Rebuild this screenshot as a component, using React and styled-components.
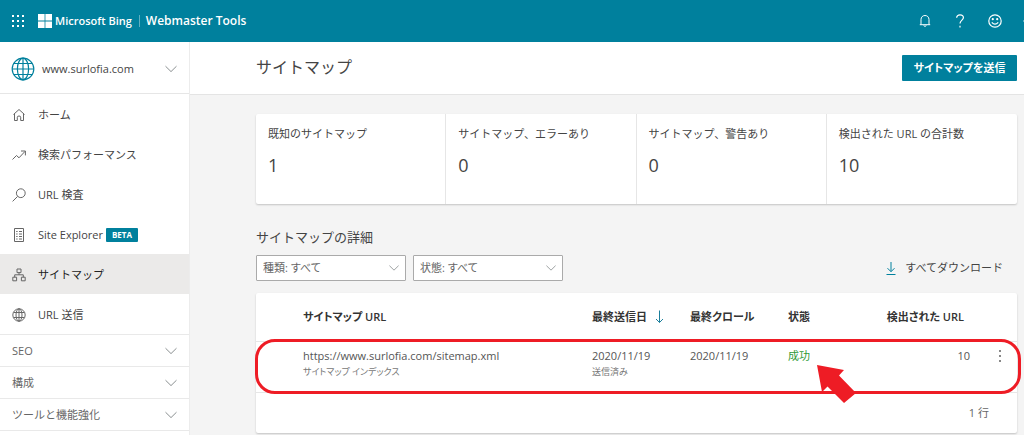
import React from "react";
import styled, { createGlobalStyle } from "styled-components";

const pages = [
  { label: "ホーム", icon: "home" },
  { label: "検索パフォーマンス", icon: "trend" },
  { label: "URL 検査", icon: "search" },
  { label: "Site Explorer", icon: "list", beta: true },
  { label: "サイトマップ", icon: "sitemap", active: true },
  { label: "URL 送信", icon: "globe" },
];

const groups = ["SEO", "構成", "ツールと機能強化"];

const stats = [
  { label: "既知のサイトマップ", value: 1 },
  { label: "サイトマップ、エラーあり", value: 0 },
  { label: "サイトマップ、警告あり", value: 0 },
  { label: "検出された URL の合計数", value: 10 },
];

const filters = [
  { id: "type", name: "種類", value: "種類: すべて" },
  { id: "status", name: "状態", value: "状態: すべて" },
];

const icons = {
  home: <path d="M1.5 6.5 7 1.5l5.500 5M2.500 5.800V12.500H5.300V9.200q0-1.200 1.700-1.200t1.700 1.200V12.500H11.500V5.800" />,
  trend: <path d="M.5 11.5 4.5 7.500l2.500 2.300L13 3.400M9 3h4.400v4.400" />,
  search: (
    <>
      <circle cx="8.800" cy="5.200" r="4.400" />
      <path d="M5.600 8.400.6 13.400" />
    </>
  ),
  list: (
    <path d="M2.500 .5h9v13h-9zM4.200 3.500h1.400M4.200 6h1.400M4.200 8.500h1.400M4.200 11h1.400M7 3.500h3M7 6h3M7 8.500h3M7 11h3" />
  ),
  sitemap: (
    <path d="M5 1h4v3.600H5zM.8 9.200h3.800v3.600H.8zM9.400 9.200h3.800v3.600H9.400zM7 4.600v2.200M2.700 9.200V6.800h8.600v2.400" />
  ),
  globe: (
    <>
      <circle cx="7" cy="7" r="6.200" />
      <ellipse cx="7" cy="7" rx="3" ry="6.200" />
      <path d="M1.600 4.500h10.800M1.600 9.500h10.800M7 .8v12.400" />
    </>
  ),
};

function Chevron({ size = 12 }) {
  return (
    <LineSvg width={size} height={size} viewBox="0 0 12 12" $color="#8a8f90">
      <path d="m.5 3.2 5.5 5.4 5.5-5.4" />
    </LineSvg>
  );
}

function TopBar() {
  return (
    <Header>
      <BarButton aria-label="アプリ">
        <svg width="14" height="14" viewBox="0 0 14 14" fill="#fff">
          {[1, 6, 11].map((y) =>
            [1, 6, 11].map((x) => (
              <rect key={`${x}-${y}`} x={x} y={y} width="2" height="2" />
            ))
          )}
        </svg>
      </BarButton>
      <Brand href="#home">
        <svg width="14" height="14" viewBox="0 0 14 14" fill="#fff">
          <path d="M0 0h6.600v6.600H0zM7.400 0H14v6.600H7.400zM0 7.400h6.600V14H0zM7.400 7.400H14V14H7.400z" />
        </svg>
        <BrandName>Microsoft Bing</BrandName>
        <Product>Webmaster Tools</Product>
      </Brand>
      <Actions>
        <BarButton aria-label="通知">
          <LineSvg width="14" height="14" viewBox="0 0 14 14" $color="#fff">
            <path d="M3 10.500V5.600C3 3 4.800 1.500 7 1.500S11 3 11 5.600v4.900M1.800 10.700h10.400M5.600 11.600q1.400 1.600 2.800 0" />
          </LineSvg>
        </BarButton>
        <BarButton aria-label="ヘルプ">
          <LineSvg width="14" height="14" viewBox="0 0 14 14" $color="#fff" $stroke={1.2}>
            <path d="M3.600 3.800C3.800 1.800 5.200.8 7 .8s3.400 1.100 3.400 3C10.400 6 7 6.400 7 9.600M7 11.800v1.600" />
          </LineSvg>
        </BarButton>
        <BarButton aria-label="フィードバック">
          <LineSvg width="14" height="14" viewBox="0 0 14 14" $color="#fff" $stroke={1.2}>
            <circle cx="7" cy="7" r="6.200" />
            <path d="M3.800 8.300q3.200 3.800 6.400 0" />
            <circle cx="4.800" cy="5.200" r=".5" />
            <circle cx="9.200" cy="5.200" r=".5" />
          </LineSvg>
        </BarButton>
        <BarButton aria-label="設定">
          <LineSvg width="14" height="14" viewBox="0 0 14 14" $color="#fff">
            <circle cx="7" cy="7" r="2" />
            <circle cx="7" cy="7" r="4.400" />
            <path d="M7 .3v2.300M7 11.400v2.300M.3 7h2.300M11.400 7h2.300M2.300 2.300l1.600 1.600M10.100 10.100l1.600 1.600M2.300 11.700l1.600-1.600M10.100 3.900l1.600-1.600" />
          </LineSvg>
        </BarButton>
      </Actions>
    </Header>
  );
}

function Sidebar() {
  return (
    <Side>
      <SitePicker>
        <LineSvg width="24" height="24" viewBox="0 0 24 24" $color="#00809d" $stroke={1.2}>
          <circle cx="12" cy="12" r="10.800" />
          <ellipse cx="12" cy="12" rx="5.600" ry="10.800" />
          <path d="M12 1.200v21.600M1.200 12h21.600M2.800 6.500h18.400M2.800 17.500h18.400" />
        </LineSvg>
        <Grow>www.surlofia.com</Grow>
        <Chevron />
      </SitePicker>
      <nav>
        {pages.map((page) => (
          <NavLink key={page.label} href="#nav" $active={page.active}>
            <LineSvg width="14" height="14" viewBox="0 0 14 14" $color="#666">
              {icons[page.icon]}
            </LineSvg>
            {page.label}
            {page.beta && <Beta>BETA</Beta>}
          </NavLink>
        ))}
      </nav>
      {groups.map((group) => (
        <Group key={group}>
          <Grow>{group}</Grow>
          <Chevron />
        </Group>
      ))}
    </Side>
  );
}

function SitemapTable() {
  return (
    <TableCard>
      <Table>
        <colgroup>
          <col />
          <col width="98" />
          <col width="98" />
          <col width="80" />
          <col width="102" />
          <col width="47" />
        </colgroup>
        <thead>
          <tr>
            <Th $first>サイトマップ URL</Th>
            <Th>
              <Sort>
                最終送信日
                <LineSvg width="9" height="13" viewBox="0 0 9 13" $color="#1b7f9c">
                  <path d="M4.500 .5v12M1 9l3.500 3.500L8 9" />
                </LineSvg>
              </Sort>
            </Th>
            <Th>最終クロール</Th>
            <Th>状態</Th>
            <Th $right>検出された URL</Th>
            <Th />
          </tr>
        </thead>
        <tbody>
          <tr>
            <Td $first>
              https://www.surlofia.com/sitemap.xml
              <Note>サイトマップ インデックス</Note>
            </Td>
            <Td>
              2020/11/19
              <Note>送信済み</Note>
            </Td>
            <Td>2020/11/19</Td>
            <Td>
              <Status>
                成功
                <Pointer width="40" height="38" viewBox="0 0 40 38">
                  <path d="M0 0 27 5 22 10.500 39 28 27 38 10.500 21.500 5 27z" />
                </Pointer>
              </Status>
            </Td>
            <Td $right>10</Td>
            <Td>
              <MoreButton aria-label="その他">
                <svg width="2" height="12" viewBox="0 0 2 12" fill="#888">
                  <path d="M0 0h2v2H0zM0 5h2v2H0zM0 10h2v2H0z" />
                </svg>
              </MoreButton>
            </Td>
          </tr>
        </tbody>
      </Table>
      <TableFooter>1 行</TableFooter>
      <RowMark />
    </TableCard>
  );
}

export default function App() {
  return (
    <>
      <GlobalStyle />
      <TopBar />
      <Layout>
        <Sidebar />
        <Main>
          <PageHead>
            <Title>サイトマップ</Title>
            <Submit>サイトマップを送信</Submit>
          </PageHead>
          <Content>
            <Stats>
              {stats.map((stat) => (
                <Stat key={stat.label}>
                  <StatLabel>{stat.label}</StatLabel>
                  <StatValue>{stat.value}</StatValue>
                </Stat>
              ))}
            </Stats>
            <SubTitle>サイトマップの詳細</SubTitle>
            <Toolbar>
              {filters.map((filter) => (
                <SelectBox key={filter.id}>
                  <Select id={filter.id} aria-label={filter.name}>
                    <option>{filter.value}</option>
                  </Select>
                  <Chevron size={10} />
                </SelectBox>
              ))}
              <Download>
                <LineSvg width="10" height="13" viewBox="0 0 10 13" $color="#00809d">
                  <path d="M5 0v9.500M1.500 6.200 5 9.700l3.500-3.500M.5 12.500h9" />
                </LineSvg>
                すべてダウンロード
              </Download>
            </Toolbar>
            <SitemapTable />
          </Content>
        </Main>
      </Layout>
    </>
  );
}

const GlobalStyle = createGlobalStyle`
  * {
    box-sizing: border-box;
  }
  body {
    background: #f4f4f4;
    color: #444;
    font-family: "Open Sans", "Noto Sans CJK JP", sans-serif;
    font-size: 11px;
    line-height: 16px;
    margin: 0;
    overflow-x: hidden;
  }
  #root {
    display: flex;
    flex-direction: column;
    min-height: 100vh;
  }
  button,
  select {
    background: none;
    border: 0;
    color: inherit;
    font: inherit;
    padding: 0;
  }
  a {
    color: inherit;
    text-decoration: none;
  }
`;

const LineSvg = styled.svg`
  fill: none;
  flex: none;
  stroke: ${(props) => props.$color};
  stroke-width: ${(props) => props.$stroke || 1};
`;
const Grow = styled.span`
  flex: 1;
  text-align: left;
`;

const Header = styled.header`
  align-items: center;
  background: #00809d;
  color: white;
  display: flex;
  height: 42px;
  overflow: hidden;
`;
const BarButton = styled.button`
  align-items: center;
  display: flex;
  flex: none;
  height: 42px;
  justify-content: center;
  width: 35px;
`;
const Brand = styled.a`
  align-items: center;
  display: flex;
  flex: none;
  font-size: 12px;
  font-weight: 600;
  gap: 3px;
  padding-left: 3px;
`;
const BrandName = styled.span`
  border-right: 1px solid #5fb0c2;
  font-size: 11px;
  line-height: 12px;
  padding-right: 7px;
`;
const Product = styled.span`
  padding-left: 3px;
`;
const Actions = styled.div`
  display: flex;
  margin-left: auto;
  margin-right: -23px;
`;

const Layout = styled.div`
  display: flex;
  flex: 1;
`;
const Side = styled.aside`
  background: white;
  border-right: 1px solid #ececec;
  flex: none;
  width: 190px;
`;
const SitePicker = styled.button`
  align-items: center;
  border-bottom: 1px solid #e6e6e6;
  display: flex;
  gap: 7px;
  height: 52px;
  padding: 2px 12px 0 11px;
  width: 100%;
`;
const NavLink = styled.a`
  align-items: center;
  background: ${(props) => (props.$active ? "#ebeae9" : "none")};
  color: ${(props) => (props.$active ? "#222" : "#444")};
  display: flex;
  gap: 12px;
  height: 40px;
  padding: 1px 12px 0;
`;
const Beta = styled.span`
  background: #00809d;
  border-radius: 1px;
  color: white;
  font-size: 8px;
  font-weight: 700;
  line-height: 14px;
  margin-left: -9px;
  padding: 0 6px;
`;
const Group = styled.button`
  align-items: center;
  border-top: 1px solid #e9e9e9;
  color: #666;
  display: flex;
  height: 32px;
  padding: 0 12px;
  width: 100%;

  &:last-child {
    border-bottom: 1px solid #e9e9e9;
    height: 33px;
  }
`;

const Main = styled.main`
  flex: 1;
  min-width: 0;
`;
const PageHead = styled.div`
  align-items: center;
  background: white;
  border-bottom: 1px solid #e4e4e4;
  display: flex;
  height: 53px;
  justify-content: space-between;
  padding: 0 7px 0 66px;
`;
const Title = styled.h1`
  font-size: 16px;
  font-weight: 400;
  line-height: 24px;
  margin: 0 0 2px;
`;
const Submit = styled.button`
  background: #00809d;
  border-radius: 1px;
  color: white;
  font-feature-settings: "palt";
  font-weight: 600;
  height: 26px;
  width: 115px;
`;
const Content = styled.div`
  padding: 19px 7px 3px 66px;
`;
const Stats = styled.div`
  background: white;
  border-radius: 2px;
  box-shadow: 0 1px 2px rgba(0, 0, 0, 0.2);
  display: grid;
  grid-template-columns: repeat(4, 1fr);
`;
const Stat = styled.div`
  border-right: 1px solid #e6e6e6;
  height: 90px;
  padding: 12px;

  &:last-child {
    border-right: 0;
  }
`;
const StatLabel = styled.div`
  white-space: nowrap;
`;
const StatValue = styled.div`
  font-size: 18px;
  line-height: 24px;
  margin-top: 11px;
`;
const SubTitle = styled.h2`
  font-size: 13px;
  font-weight: 400;
  line-height: 20px;
  margin: 23px 0 8px;
`;
const Toolbar = styled.div`
  align-items: center;
  display: flex;
  gap: 7px;
`;
const SelectBox = styled.div`
  align-items: center;
  background: white;
  border: 1px solid #aaa;
  border-radius: 1px;
  color: #666;
  display: grid;
  height: 26px;
  width: 150px;

  > * {
    grid-area: 1 / 1;
  }
  > svg {
    justify-self: end;
    margin-right: 6px;
    pointer-events: none;
  }
`;
const Select = styled.select`
  appearance: none;
  font-feature-settings: "palt";
  height: 24px;
  padding: 0 6px;
  width: 100%;
`;
const Download = styled.button`
  align-items: center;
  display: flex;
  gap: 9px;
  margin-left: auto;
  padding-right: 14px;
`;

const TableCard = styled.section`
  background: white;
  border-radius: 2px;
  box-shadow: 0 1px 2px rgba(0, 0, 0, 0.2);
  margin-top: 12px;
  position: relative;
`;
const Table = styled.table`
  border-collapse: collapse;
  table-layout: fixed;
  width: 100%;
`;
const Th = styled.th`
  border-bottom: 1px solid #e6e6e6;
  color: #333;
  font-feature-settings: "palt";
  font-weight: 600;
  height: 48px;
  padding: 0 0 0 ${(props) => (props.$first ? "47px" : "0")};
  padding-right: ${(props) => (props.$right ? "6px" : "0")};
  text-align: ${(props) => (props.$right ? "right" : "left")};
  white-space: nowrap;
`;
const Td = styled.td`
  border-bottom: 1px solid #e6e6e6;
  color: #555;
  height: 51px;
  padding: 6px 0 0 ${(props) => (props.$first ? "47px" : "0")};
  text-align: ${(props) => (props.$right ? "right" : "left")};
  vertical-align: top;
`;
const Note = styled.div`
  color: #777;
  font-feature-settings: "palt";
  font-size: 9px;
`;
const Sort = styled.span`
  align-items: center;
  display: flex;
  gap: 8px;
`;
const Status = styled.span`
  color: #2f9a36;
  position: relative;
`;
const Pointer = styled.svg`
  fill: #ee1c25;
  left: 29px;
  position: absolute;
  top: 17px;
  z-index: 2;
`;
const MoreButton = styled.button`
  align-items: center;
  display: flex;
  height: 16px;
  justify-content: center;
  margin-left: 22px;
  width: 16px;
`;
const TableFooter = styled.div`
  color: #666;
  line-height: 40px;
  padding-right: 28px;
  text-align: right;
`;
const RowMark = styled.div`
  border: 3px solid #ee1c25;
  border-radius: 20px;
  height: 55px;
  left: -1px;
  pointer-events: none;
  position: absolute;
  right: -4px;
  top: 46px;
`;
